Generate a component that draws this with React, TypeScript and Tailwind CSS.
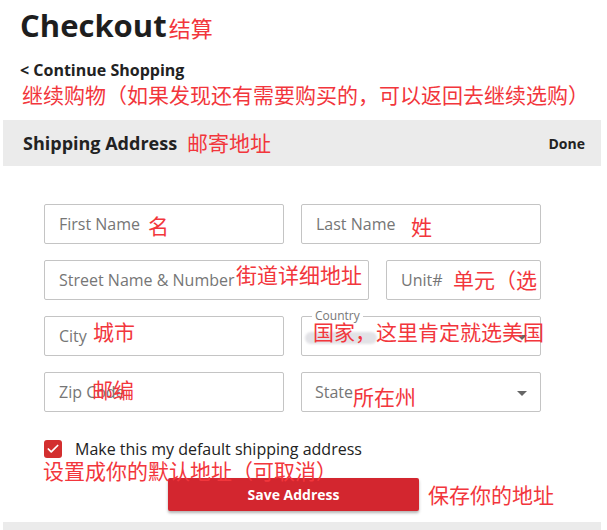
import { Check } from 'lucide-react';

const note = 'absolute whitespace-nowrap leading-none text-[21px] text-[#f2363c] pointer-events-none [font-family:"Noto_Sans_CJK_SC",sans-serif]';

function Field({ placeholder, width, children }: { placeholder: string; width: string; children?: React.ReactNode }) {
  return (
    <div className={`relative h-[40px] ${width}`}>
      <input
        placeholder={placeholder}
        className="w-full h-full border border-[#c4c4c4] rounded-[2px] pl-[14px] text-[16px] text-[#222] placeholder:text-[#767676] outline-none bg-white"
      />
      {children}
    </div>
  );
}

function Arrow() {
  return <div className="absolute right-[13px] top-[18px] w-0 h-0 border-l-[5px] border-r-[5px] border-t-[5px] border-l-transparent border-r-transparent border-t-[#666]" />;
}

export default function App() {
  return (
    <div className='w-[607px] h-[530px] bg-white overflow-hidden flex flex-col [font-family:"Open_Sans",sans-serif] text-[#222]'>
      {/* Page header */}
      <div className="pl-[20px] pt-[6px]">
        <div className="flex items-baseline gap-[2px]">
          <h1 className="text-[31px] leading-[38px] font-bold text-[#1e1e1e]">Checkout</h1>
          <span className='text-[22px] text-[#f2363c] [font-family:"Noto_Sans_CJK_SC",sans-serif]'>结算</span>
        </div>
        <div className="mt-[15px] text-[16px] leading-[22px] font-bold">&lt; Continue Shopping</div>
        <div className='mt-[3px] ml-[2px] text-[21px] leading-[21px] text-[#f2363c] whitespace-nowrap [font-family:"Noto_Sans_CJK_SC",sans-serif]'>
          继续购物（如果发现还有需要购买的，可以返回去继续选购）
        </div>
      </div>

      {/* Card */}
      <div className="mt-[15px] ml-[3px] mr-[6px] flex-1 flex flex-col">
        <div className="h-[46px] bg-[#ebebeb] flex items-center pl-[20px] pr-[16px]">
          <span className="text-[18px] font-bold">Shipping Address</span>
          <span className='ml-[10px] text-[21px] text-[#f2363c] [font-family:"Noto_Sans_CJK_SC",sans-serif]'>邮寄地址</span>
          <span className="ml-auto text-[14px] font-bold">Done</span>
        </div>

        <div className="pl-[41px] pt-[38px] flex flex-col">
          <div className="flex flex-col gap-[16px]">
            <div className="flex gap-[17px]">
              <Field placeholder="First Name" width="w-[240px]">
                <span className={`${note} left-[104px] top-[11px]`}>名</span>
              </Field>
              <Field placeholder="Last Name" width="w-[240px]">
                <span className={`${note} left-[110px] top-[12px]`}>姓</span>
              </Field>
            </div>
            <div className="flex gap-[17px]">
              <Field placeholder="Street Name & Number" width="w-[325px]">
                <span className={`${note} left-[192px] top-[4px]`}>街道详细地址</span>
              </Field>
              <Field placeholder="Unit#" width="w-[155px]">
                <span className={`${note} left-[67px] top-[9px]`}>单元（选</span>
              </Field>
            </div>
            <div className="flex gap-[17px]">
              <Field placeholder="City" width="w-[240px]">
                <span className={`${note} left-[49px] top-[5px]`}>城市</span>
              </Field>
              <div className="relative w-[240px] h-[40px] border border-[#c4c4c4] rounded-[2px]">
                <span className="absolute -top-[9px] left-[10px] bg-white px-[3px] text-[12px] leading-[16px] text-[#777]">Country</span>
                <div className="absolute left-[3px] top-[15px] w-[72px] h-[12px] rounded-full bg-[#e2e2e6] blur-[1px]" />
                <Arrow />
                <span className={`${note} left-[11px] top-[4px]`}>国家，这里肯定就选美国</span>
              </div>
            </div>
            <div className="flex gap-[17px]">
              <Field placeholder="Zip Code" width="w-[240px]">
                <span className={`${note} left-[48px] top-[7px]`}>邮编</span>
              </Field>
              <div className="relative w-[240px] h-[40px] border border-[#c4c4c4] rounded-[2px] flex items-center pl-[13px]">
                <span className="text-[16px] text-[#767676]">State</span>
                <Arrow />
                <span className={`${note} left-[51px] top-[13px]`}>所在州</span>
              </div>
            </div>
          </div>

          <div className="relative mt-[28px] flex items-center h-[18px]">
            <div className="w-[18px] h-[18px] rounded-[3px] bg-[#d32f2f] flex items-center justify-center">
              <Check size={14} strokeWidth={3} color="white" />
            </div>
            <span className="ml-[13px] text-[16px] text-[#222]">Make this my default shipping address</span>
            <span className={`${note} -left-[1px] top-[20px] z-10`}>设置成你的默认地址（可取消）</span>
          </div>

          <div className="mt-[20px] flex items-center">
            <button className="ml-[124px] w-[251px] h-[33px] rounded-[2px] bg-[#d3262f] text-white text-[14px] font-bold shadow-[0_2px_3px_rgba(0,0,0,0.3)]">
              Save Address
            </button>
            <span className='ml-[9px] text-[21px] text-[#f2363c] [font-family:"Noto_Sans_CJK_SC",sans-serif]'>保存你的地址</span>
          </div>
        </div>

        <div className="mt-auto h-[8px] bg-[#ebebeb]" />
      </div>
    </div>
  );
}
